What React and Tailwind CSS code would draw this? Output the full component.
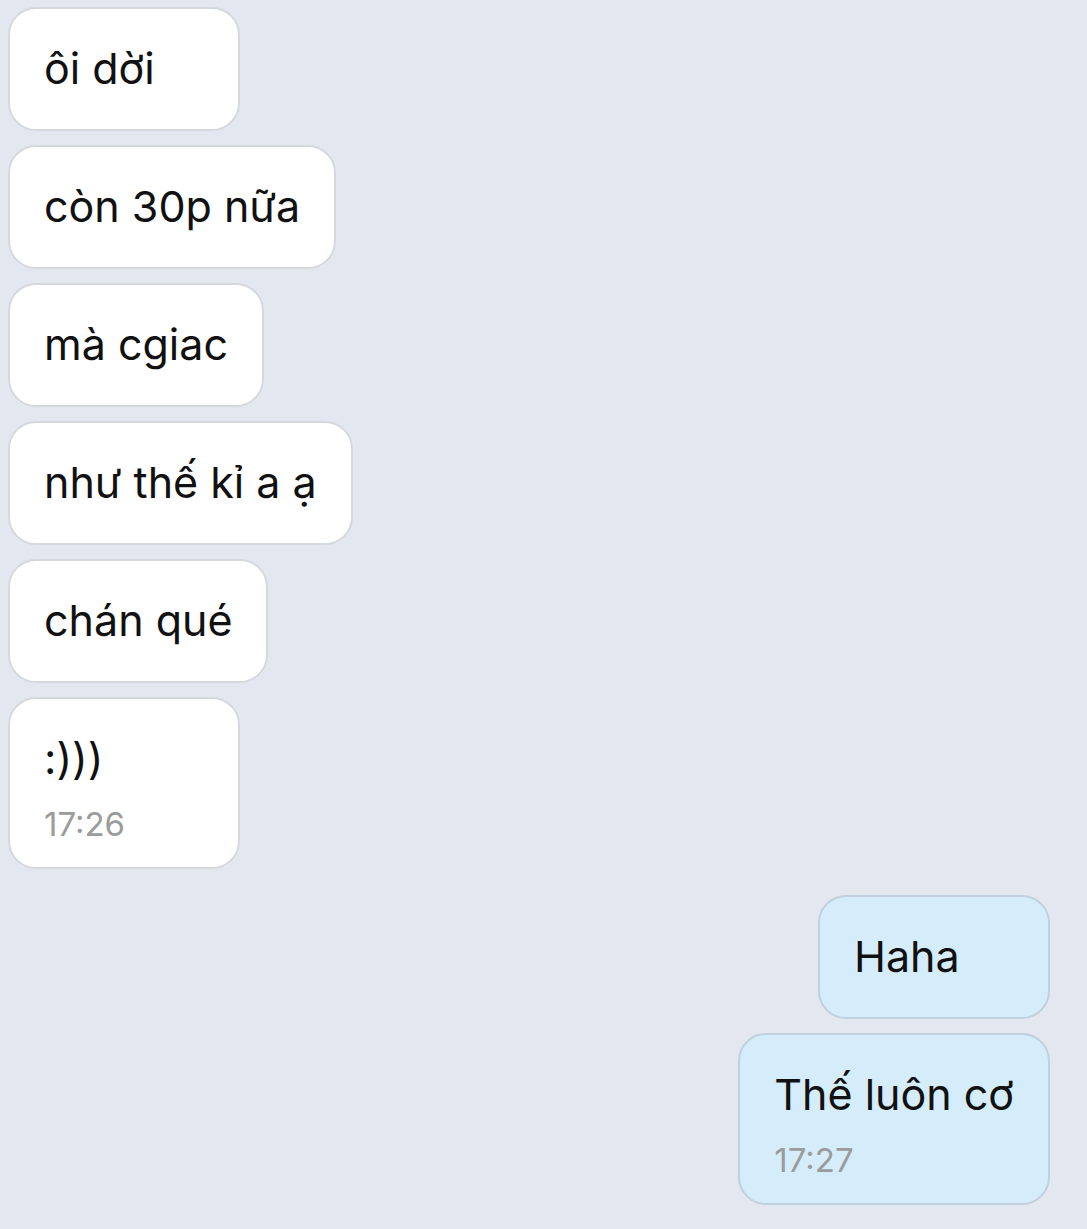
import React from "react";

const incoming = ["ôi dời", "còn 30p nữa", "mà cgiac", "như thế kỉ a ạ", "chán qué"];

function Bubble({ text, time, mine }) {
  return (
    <div
      className={
        "min-w-[232px] rounded-[28px] border-2 px-[34px] pt-[30px] " +
        (time ? "pb-[25px] " : "pb-[31px] ") +
        (mine ? "border-[#c0d0dc] bg-[#d5ecfa]" : "border-[#d5d8dd] bg-white")
      }
    >
      <div className="text-[43px] leading-[59px] text-[#111111] whitespace-nowrap">{text}</div>
      {time && (
        <div className="mt-[18px] text-[33px] leading-[36px] text-[#9b9b9b]">{time}</div>
      )}
    </div>
  );
}

export default function App() {
  return (
    <div
      className="min-h-screen w-full bg-[#e2e7f0] pt-[7px] pb-[25px]"
      style={{ fontFamily: "Inter, 'Noto Sans', sans-serif" }}
    >
      {/* received */}
      <div className="flex flex-col items-start gap-[14px] pl-[8px]">
        {incoming.map((t) => (
          <Bubble key={t} text={t} />
        ))}
        <Bubble text=":)))" time="17:26" />
      </div>

      {/* sent */}
      <div className="mt-[26px] flex flex-col items-end gap-[14px] pr-[37px]">
        <Bubble text="Haha" mine />
        <Bubble text="Thế luôn cơ" time="17:27" mine />
      </div>
    </div>
  );
}
